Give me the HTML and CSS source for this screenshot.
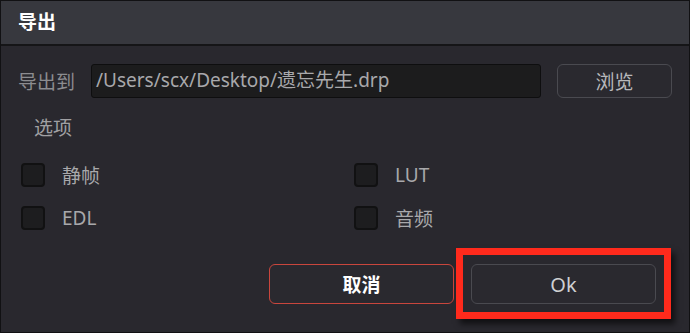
FILE: index.html
```html
<!DOCTYPE html>
<html lang="zh">
<head>
<meta charset="utf-8">
<link rel="stylesheet" href="styles.css">
</head>
<body>
<div class="dialog">
  <div class="titlebar">导出</div>
  <div class="content">
    <div class="path-row">
      <span class="label">导出到</span>
      <div class="path-input">/Users/scx/Desktop/遗忘先生.drp</div>
      <button class="btn browse">浏览</button>
    </div>
    <div class="section">选项</div>
    <div class="options">
      <label class="opt"><span class="box"></span><span>静帧</span></label>
      <label class="opt"><span class="box"></span><span>LUT</span></label>
      <label class="opt"><span class="box"></span><span>EDL</span></label>
      <label class="opt"><span class="box"></span><span>音频</span></label>
    </div>
    <div class="actions">
      <button class="btn cancel">取消</button>
      <button class="btn ok">Ok</button>
    </div>
  </div>
  <div class="highlight"></div>
</div>
</body>
</html>
```
FILE: styles.css
```css
* { box-sizing: border-box; }
html, body { margin: 0; padding: 0; }
body {
  width: 690px;
  height: 333px;
  background: #1b1b1e;
  font-family: "Noto Sans", "Noto Sans CJK SC", sans-serif;
  overflow: hidden;
}
.dialog {
  position: relative;
  width: 690px;
  height: 333px;
  background: #29282e;
  border: 1px solid #111113;
  display: flex;
  flex-direction: column;
}
.titlebar {
  height: 45px;
  flex: none;
  background: #37383e;
  border-bottom: 2px solid #151517;
  color: #ffffff;
  font-weight: bold;
  font-size: 19px;
  line-height: 43px;
  padding-left: 17px;
}
.content {
  flex: 1;
  display: flex;
  flex-direction: column;
  padding: 18px 17px 0 17px;
}
.path-row {
  display: flex;
  align-items: center;
  height: 34px;
}
.label {
  color: #8c8c90;
  font-size: 19px;
  width: 73px;
  flex: none;
}
.path-input {
  width: 450px;
  flex: none;
  height: 34px;
  background: #1c1c1d;
  border: 1px solid #0e0e0f;
  border-radius: 3px;
  color: #a8a8ab;
  font-size: 19px;
  line-height: 31px;
  padding-left: 4px;
  white-space: nowrap;
}
.btn {
  font-family: inherit;
  background: #2a292f;
  border: 1px solid #4a4a50;
  border-radius: 6px;
  cursor: pointer;
  padding: 0;
}
.browse {
  margin-left: 16px;
  width: 115px;
  flex: none;
  height: 34px;
  color: #b8b8bb;
  font-size: 19px;
}
.section {
  margin-top: 17px;
  padding-left: 16px;
  color: #a0a0a3;
  font-size: 19px;
  line-height: 26px;
}
.options {
  display: grid;
  grid-template-columns: 333px 1fr;
  row-gap: 19px;
  margin-top: 22px;
  padding-left: 3px;
}
.opt {
  display: flex;
  align-items: center;
  gap: 17px;
  color: #a8a8ab;
  font-size: 19px;
  height: 24px;
}
.box {
  width: 24px;
  height: 24px;
  background: #1d1d1f;
  border: 2px solid #111112;
  border-radius: 4px;
  flex: none;
}
.actions {
  display: flex;
  justify-content: flex-end;
  gap: 17px;
  margin-top: 34px;
  margin-right: 16px;
}
.cancel, .ok {
  width: 185px;
  height: 40px;
}
.cancel {
  border-color: #c9463d;
  color: #ffffff;
  font-weight: bold;
  font-size: 19px;
}
.ok {
  color: #cfcfd2;
  font-size: 20px;
}
.highlight {
  position: absolute;
  left: 455px;
  top: 247px;
  width: 215px;
  height: 71px;
  border: 7px solid #ff2a1c;
  box-shadow: 4px 5px 6px rgba(0,0,0,0.6);
  pointer-events: none;
}
```
